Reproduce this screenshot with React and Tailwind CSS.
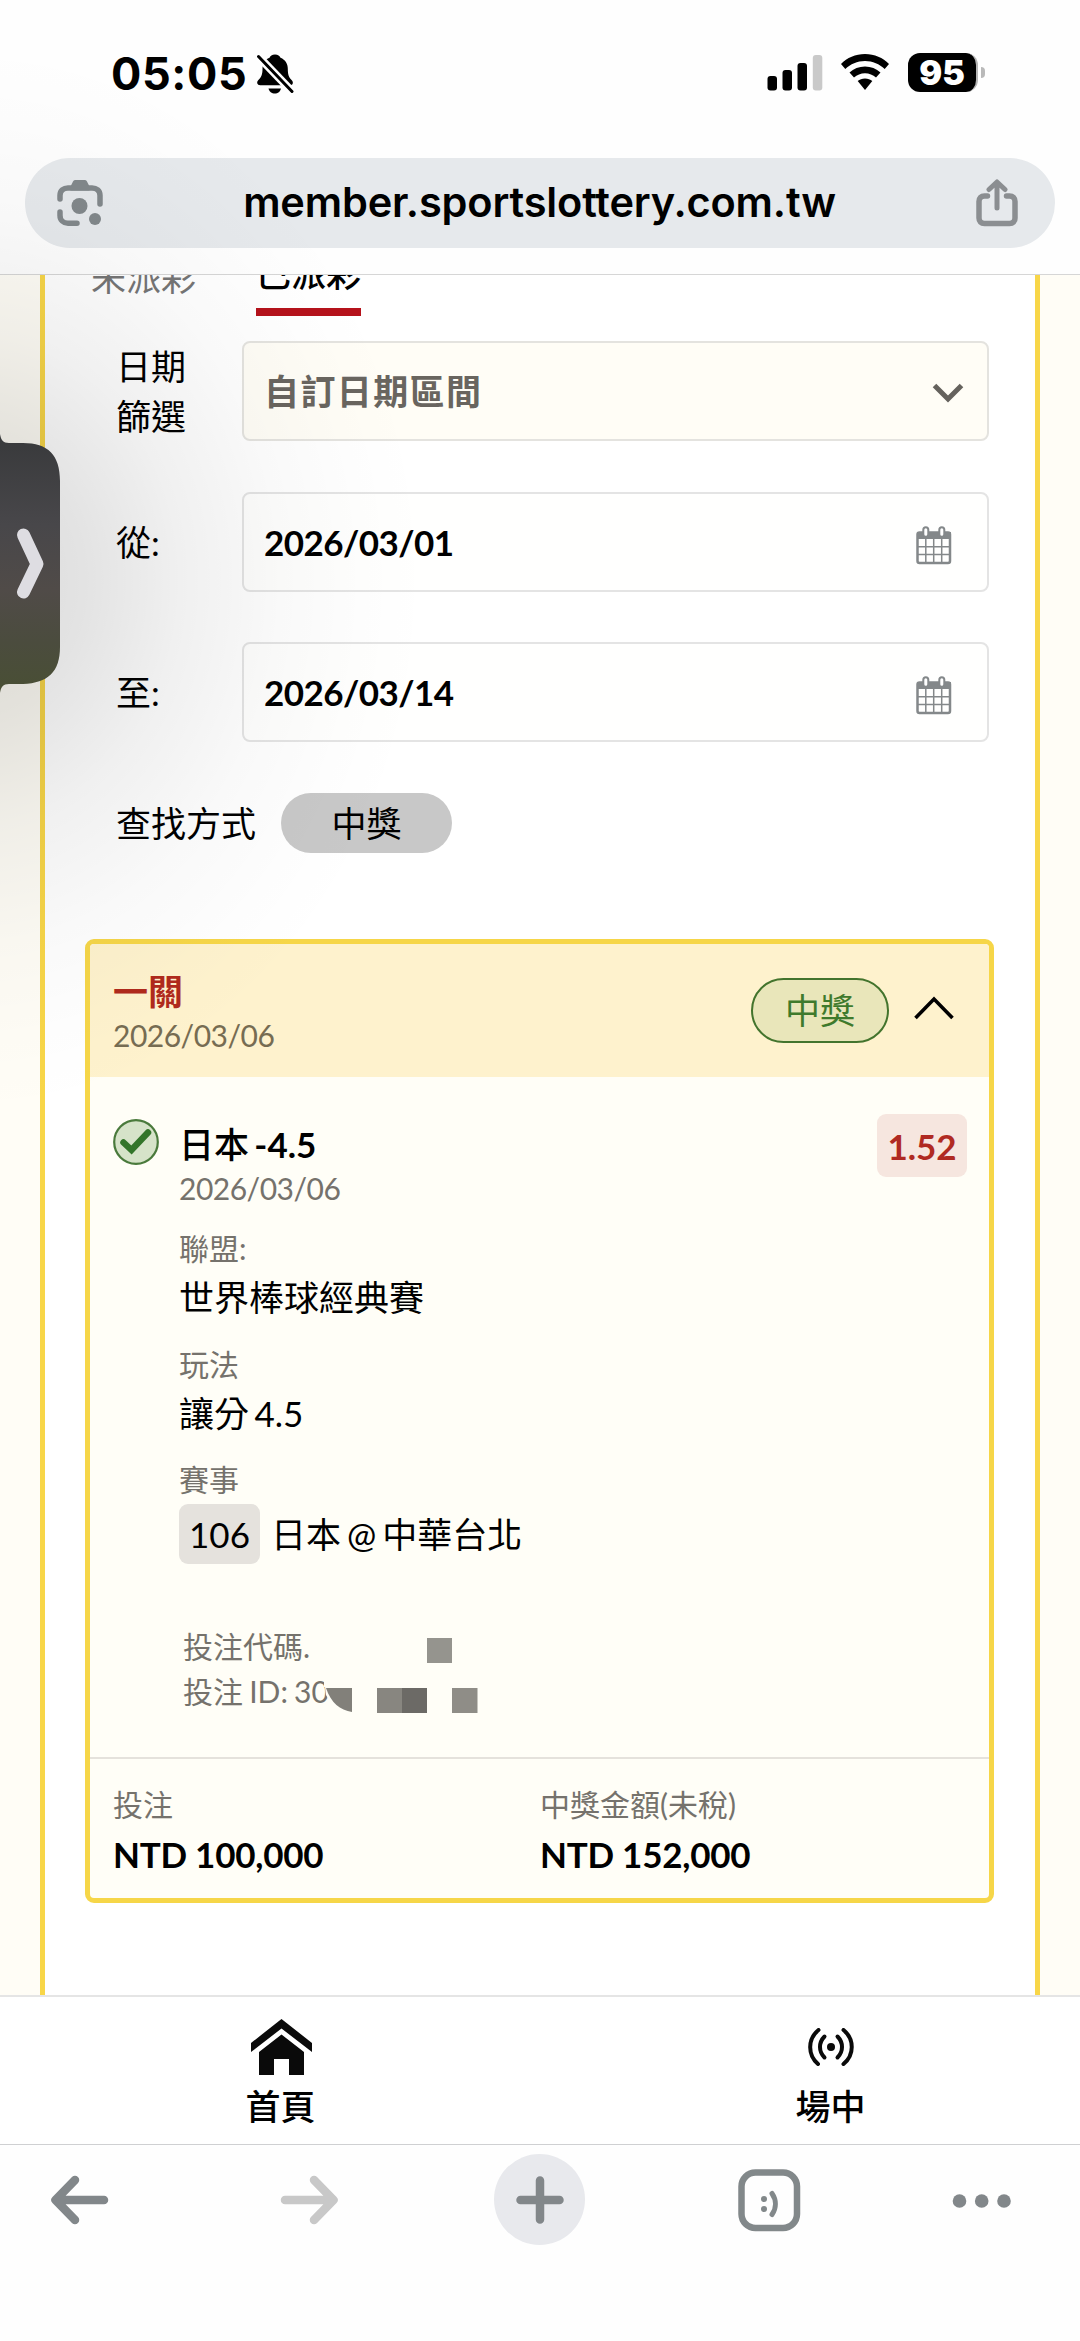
import React from "react";

const LATO = "font-[Lato,'Noto_Sans_CJK_TC',sans-serif]";

function BellOff() {
  return (
    <svg viewBox="0 0 38 40" className="h-[40px] w-[38px]">
      <path d="M19 0.500c3 0 4.800 1.600 5.500 3.300 5 2 7.300 6.200 7.300 11 0 6 1 8.700 4.200 11.700 1.600 1.600 1 4.700-1.800 4.700H4.200C1 31.200 0.500 28 2 26.500 5.200 23.300 6.500 21 6.500 14.800c0-5 2.300-9 7-11C14.200 2 16 0.500 19 0.500z" fill="#000" />
      <path d="M12.500 34.500h12.500c-0.600 3-3.200 5-6.200 5s-5.700-2-6.300-5z" fill="#000" />
      <path d="M1 1l37 38.500" stroke="#fff" strokeWidth="8" />
      <path d="M2.500 2.500l33.500 35" stroke="#000" strokeWidth="3" strokeLinecap="round" />
    </svg>
  );
}

function StatusBar() {
  return (
    <div className="flex h-[158px] items-start justify-between pr-[95px] pl-[111px]">
      <div className="flex items-start pt-[50px]">
        <span className="w-[145px] font-[Inter,sans-serif] text-[45px] leading-[48px] font-bold tracking-[0.600px] whitespace-nowrap text-black">05:05</span>
        <div className="pt-[4px]"><BellOff /></div>
      </div>
      <div className="flex items-start pt-[53px]">
        <svg viewBox="0 0 56 38" className="h-[38px] w-[56px]">
          <rect x="0.500" y="23" width="9.500" height="14.500" rx="3" />
          <rect x="15.500" y="17" width="9.500" height="20.500" rx="3" />
          <rect x="30.500" y="10" width="9.500" height="27.500" rx="3" />
          <rect x="45.800" y="2" width="9.500" height="35.500" rx="3" fill="#c9c9c9" />
        </svg>
        <svg viewBox="0 0 50 38" className="ml-[17px] h-[38px] w-[50px]">
          <path d="M25 1C15.500 1 7 4.700 1 11l4.300 5C10.500 11 17.300 7.900 25 7.900S39.500 11 44.700 16l4.300-5C43 4.700 34.500 1 25 1z" />
          <path d="M25 13.500c-6 0-11.300 2.200-15.500 6l4.500 5c3-2.600 6.800-4.200 11-4.200s8 1.600 11 4.200l4.500-5c-4.200-3.800-9.500-6-15.500-6z" />
          <path d="M25 25.500c-3 0-5.300 1-7.300 2.600L25 37l7.300-8.900c-2-1.600-4.300-2.600-7.300-2.600z" />
        </svg>
        <div className="ml-[18px] flex h-[39px] w-[70px] items-center justify-center rounded-[12px] border-r-[2px] border-[#b5b5b5] bg-black font-[Inter,sans-serif] text-[34px] leading-[38px] font-black text-white">95</div>
        <div className="mt-[14px] ml-[3px] h-[11px] w-[4px] rounded-r-full bg-[#b9b9b9]" />
      </div>
    </div>
  );
}

function UrlBar() {
  return (
    <div className="mx-[25px] flex h-[90px] items-center justify-between rounded-full bg-[#e6e9ec] pr-[36px] pl-[31px]">
      <svg viewBox="0 0 48 48" className="h-[48px] w-[48px]" fill="none" stroke="#82888b" strokeWidth="5.500" strokeLinecap="round">
        <path d="M4 20v-3.500C4 11.500 7.500 9 12 9h24c4.500 0 8 2.500 8 7.500V25" />
        <path d="M4 33v3.500c0 4.500 3.500 7.800 8 7.800h9" />
        <path d="M14.500 7.500l2.500-5c.5-1 1.300-1.500 2.500-1.500h9c1.200 0 2 .5 2.500 1.500l2.500 5v4h-19z" fill="#82888b" stroke="none" />
        <circle cx="23.500" cy="27" r="8" fill="#82888b" stroke="none" />
        <circle cx="39" cy="40" r="6" fill="#82888b" stroke="none" />
      </svg>
      <span className="-mt-[2px] font-[Inter,sans-serif] text-[41.500px] leading-[48px] font-semibold tracking-[-0.150px] whitespace-nowrap text-black">member.sportslottery.com.tw</span>
      <svg viewBox="0 0 44 48" className="h-[48px] w-[44px]" fill="none" stroke="#8b8e91" strokeWidth="5.500" strokeLinecap="round" strokeLinejoin="round">
        <path d="M12.500 17H9.500C6 17 4 19 4 22.500v16.500c0 3.500 2 5.500 5.500 5.500h25c3.500 0 5.500-2 5.500-5.500V22.500c0-3.500-2-5.500-5.500-5.500h-3" />
        <path d="M22 29V4M14 10.500l8-7.500 8 7.500" strokeWidth="5" />
      </svg>
    </div>
  );
}

function CalendarIcon() {
  return (
    <svg viewBox="0 0 36 40" className="h-[40px] w-[36px]" fill="none" stroke="#84888a">
      <rect x="1.500" y="7.500" width="32.500" height="30.500" rx="2" strokeWidth="2.500" />
      <path d="M1 7h34v7H1z" fill="#84888a" stroke="none" />
      <rect x="7.300" y="2.200" width="5" height="9.500" rx="2.500" fill="#fff" strokeWidth="2" />
      <rect x="23.300" y="2.200" width="5" height="9.500" rx="2.500" fill="#fff" strokeWidth="2" />
      <path d="M9.800 14v23M17.700 14v23M25.700 14v23M2 21.700h32M2 29.500h32" strokeWidth="1.500" />
    </svg>
  );
}

function DateRow({ label, value }) {
  return (
    <div className="flex h-[100px] items-center">
      <span className="w-[126px] text-[35px] leading-[50px]">{label}</span>
      <div className="flex h-[100px] w-[747px] items-center justify-between rounded-[8px] border-2 border-[#e4e4e4] bg-[#fffffe] pr-[35px] pl-[20px]">
        <span className="text-[35px] leading-[44px] font-bold tracking-[-0.550px]">{value}</span>
        <div className="pt-[6px]"><CalendarIcon /></div>
      </div>
    </div>
  );
}

function Filters() {
  return (
    <div className="pl-[71px]">
      <div className="mt-[25px] flex h-[100px] items-center">
        <span className="w-[126px] text-[35px] leading-[50px]">日期<br />篩選</span>
        <div className="flex h-[100px] w-[747px] items-center justify-between rounded-[8px] border-2 border-[#e4e3df] bg-[#fffdf6] pr-[23px] pl-[20px]">
          <span className="text-[35px] leading-[44px] font-bold tracking-[1.400px] text-[#69655f]">自訂日期區間</span>
          <svg viewBox="0 0 32 20" className="mt-[3px] h-[20px] w-[32px]" fill="none" stroke="#65625d" strokeWidth="5">
            <path d="M2.500 2.500L16 16 29.500 2.500" />
          </svg>
        </div>
      </div>
      <div className="mt-[51px]"><DateRow label="從:" value="2026/03/01" /></div>
      <div className="mt-[50px]"><DateRow label="至:" value="2026/03/14" /></div>
      <div className="mt-[51px] flex h-[60px] items-center">
        <span className="w-[165px] text-[35px] leading-[44px]">查找方式</span>
        <span className="flex h-[60px] w-[171px] items-center justify-center rounded-full bg-[#c8c8c8] text-[35px] leading-[44px]">中獎</span>
      </div>
    </div>
  );
}

/* Pixelated patches that hide the bet code and the bet number. */
function Mosaic() {
  return (
    <svg viewBox="0 0 300 92" className="absolute top-px left-[138px] h-[92px] w-[300px]">
      <rect x="7" y="45" width="30" height="17" fill="#fffef7" />
      <path d="M8 62l1 8 7 12h20V62z" fill="#fffef7" />
      <path d="M9 63h26v24c-12-2-21-9-26-24z" fill="#82807a" />
      <rect x="110" y="13" width="25" height="25" fill="#95948e" />
      <rect x="60" y="63" width="25" height="25" fill="#888680" />
      <rect x="85" y="63" width="25" height="25" fill="#6c6a66" />
      <rect x="135" y="63" width="25.500" height="25" fill="#8f8d87" />
    </svg>
  );
}

function BetCard() {
  return (
    <div className="mt-[86px] mr-[41px] ml-[40px] h-[964px] overflow-hidden rounded-[9px] border-[5px] border-[#f6d648] bg-[#fffef7]">
      <div className="flex h-[133px] items-start justify-between bg-[#fef2cd] pr-[35px] pl-[23px]">
        <div className="flex flex-col pt-[25px]">
          <span className="text-[35px] leading-[44px] font-bold text-[#b02a1c]">一關</span>
          <span className="text-[30px] leading-[44px] tracking-[-0.500px] text-[#766c52]">2026/03/06</span>
        </div>
        <div className="flex items-center pt-[34px]">
          <span className="flex h-[65px] w-[138px] items-center justify-center rounded-full border-2 border-[#43742d] bg-[#e9e6ba] pb-[2px] text-[35px] leading-[44px] text-[#3f7a2c]">中獎</span>
          <svg viewBox="0 0 40 24" className="ml-[25px] h-[24px] w-[40px] -translate-y-[3px]" fill="none" stroke="#000" strokeWidth="3.600">
            <path d="M1.500 22L20 3l18.500 19" />
          </svg>
        </div>
      </div>

      <div className="flex items-start pr-[22px] pl-[23px]">
        <svg viewBox="0 0 46 46" className="mt-[42px] h-[46px] w-[46px]">
          <circle cx="23" cy="23" r="21.800" fill="#d6e3c9" stroke="#4a7a3c" strokeWidth="2.200" />
          <path d="M10.500 23.500l8 7.500L35 13.500" fill="none" stroke="#33752a" strokeWidth="6.500" strokeLinecap="round" />
        </svg>
        <div className="ml-[20px] flex grow flex-col pt-[45px] [word-spacing:-3.500px]">
          <span className="text-[35px] leading-[44px] font-medium">日本 <span className="font-bold">-4.5</span></span>
          <span className="text-[30px] leading-[44px] tracking-[-0.500px] text-[#75726c]">2026/03/06</span>
          <span className="mt-[16px] text-[30px] leading-[44px] text-[#75726c]">聯盟:</span>
          <span className="mt-[5px] text-[35px] leading-[44px]">世界棒球經典賽</span>
          <span className="mt-[23px] text-[30px] leading-[44px] text-[#75726c]">玩法</span>
          <span className="mt-[5px] text-[35px] leading-[44px]">讓分 4.5</span>
          <span className="mt-[22px] text-[30px] leading-[44px] text-[#75726c]">賽事</span>
          <div className="mt-[3px] flex h-[60px] items-center gap-[11px]">
            <span className="flex h-[60px] w-[81px] items-center justify-center rounded-[9px] bg-[#e5e2dd] text-[35px] leading-[44px]">106</span>
            <span className="text-[35px] leading-[44px] [word-spacing:-3px]">日本 @ 中華台北</span>
          </div>
          <div className="relative mt-[60px] flex flex-col pl-[4px] text-[30px] leading-[44px] text-[#75726c]">
            <span>投注代碼.</span>
            <span className="mt-px [word-spacing:-1.500px]">投注 ID: 30</span>
            <Mosaic />
          </div>
        </div>
        <span className="mt-[37px] flex h-[63px] w-[90px] items-center justify-center rounded-[9px] bg-[#f6e6df] text-[35px] leading-[44px] font-bold text-[#b02a22]">1.52</span>
      </div>

      <div className="mt-[44px] grid grid-cols-[427px_1fr] border-t-2 border-[#e5e2dc] pt-[23px] pl-[23px]">
        <div className="flex flex-col">
          <span className="text-[30px] leading-[44px] text-[#75726c]">投注</span>
          <span className="mt-[6px] text-[35px] leading-[44px] font-bold tracking-[-0.250px]">NTD 100,000</span>
        </div>
        <div className="flex flex-col">
          <span className="text-[30px] leading-[44px] text-[#75726c]">中獎金額(未稅)</span>
          <span className="mt-[6px] text-[35px] leading-[44px] font-bold tracking-[-0.250px]">NTD 152,000</span>
        </div>
      </div>
    </div>
  );
}

function SiteNav() {
  return (
    <nav className="flex h-[149px] shrink-0 border-t-2 border-[#e5e5e5] bg-white">
      <div className="flex w-[561px] flex-col items-center pt-[22px]">
        <svg viewBox="0 0 61 56" className="h-[56px] w-[61px] translate-x-px" fill="#0a0a0a">
          <path d="M30.500 0L61 24v9L30.500 9.500 0 33v-9z" />
          <path d="M30.500 15.500L53 33v23H38V40H23v16H8V33z" />
        </svg>
        <span className="mt-[9px] text-[35px] leading-[44px] font-medium">首頁</span>
      </div>
      <div className="flex grow flex-col items-center pt-[31px] pl-[20px]">
        <svg viewBox="0 0 46 38" className="h-[38px] w-[46px]" fill="none" stroke="#0a0a0a" strokeWidth="4" strokeLinecap="round">
          <path d="M10.500 2C-0.500 11-0.500 27 10 36M35.500 2c11 9 11 25 0 34" />
          <path d="M16.500 8.500c-6 6-6 15 0 21M29.500 8.500c6 6 6 15 0 21" />
          <circle cx="23" cy="19" r="4" fill="#0a0a0a" stroke="none" />
        </svg>
        <span className="mt-[18px] text-[35px] leading-[44px] font-medium">場中</span>
      </div>
    </nav>
  );
}

function BrowserToolbar() {
  return (
    <div className="flex h-[197px] shrink-0 items-start justify-between border-t border-[#cfd0d2] bg-[#fefefe] pr-[68px] pl-[50px]">
      <svg viewBox="0 0 60 50" className="mt-[30px] h-[50px] w-[60px]" fill="none" stroke="#82878a" strokeWidth="8.500" strokeLinecap="round" strokeLinejoin="round">
        <path d="M54 25H6M25 5L5.500 25 25 45" />
      </svg>
      <svg viewBox="0 0 60 50" className="mt-[30px] ml-[43px] h-[50px] w-[60px]" fill="none" stroke="#c8c8c8" strokeWidth="8.500" strokeLinecap="round" strokeLinejoin="round">
        <path d="M6 25h48M35 5l19.500 20L35 45" />
      </svg>
      <div className="mt-[9px] ml-[30px] flex size-[91px] items-center justify-center rounded-full bg-[#e8e9ed]">
        <svg viewBox="0 0 48 48" className="size-[48px]" stroke="#82878a" strokeWidth="8.500" strokeLinecap="round">
          <path d="M24 4.500v39M4.500 24h39" />
        </svg>
      </div>
      <svg viewBox="0 0 64 64" className="mt-[23px] ml-[26px] size-[64px]" fill="none" stroke="#82888a" strokeWidth="6.500" strokeLinecap="round">
        <rect x="4.500" y="4.500" width="55.500" height="55.500" rx="14" />
        <circle cx="27" cy="31" r="3" fill="#82888a" stroke="none" />
        <circle cx="27" cy="41" r="3" fill="#82888a" stroke="none" />
        <path d="M35 25.500c4.500 6.500 4.500 14.500 0 21" strokeWidth="5" />
      </svg>
      <svg viewBox="0 0 60 16" className="mt-[48px] ml-[26px] h-[16px] w-[60px]" fill="#82878a">
        <circle cx="7.500" cy="8" r="6.800" />
        <circle cx="29.700" cy="8" r="6.800" />
        <circle cx="52" cy="8" r="6.800" />
      </svg>
    </div>
  );
}

/* Handle of the picture-in-picture window parked at the left edge, with its soft shadow. */
function PipHandle() {
  return (
    <>
      <div className="pointer-events-none absolute top-[40px] left-0 h-[1100px] w-[480px] bg-[radial-gradient(ellipse_460px_540px_at_-30px_540px,rgba(0,0,0,0.150)_0%,rgba(0,0,0,0.110)_25%,rgba(0,0,0,0.060)_46%,rgba(0,0,0,0.022)_68%,rgba(0,0,0,0.006)_86%,rgba(0,0,0,0)_100%)]" />
      <svg viewBox="0 0 62 264" className="absolute top-[432px] left-0 h-[264px] w-[62px]">
        <defs>
          <linearGradient id="pip" x1="0" y1="0" x2="0" y2="1">
            <stop offset="0" stopColor="#38393b" />
            <stop offset="0.350" stopColor="#48474a" />
            <stop offset="0.600" stopColor="#504b48" />
            <stop offset="0.800" stopColor="#4b4c3e" />
            <stop offset="1" stopColor="#494f34" />
          </linearGradient>
        </defs>
        <path d="M0 2C1 8 3 11 9 11h14c25 0 37 12 37 38v166c0 25-12 36-37 37H9c-6 0-8 3-9 9z" fill="url(#pip)" />
        <path d="M23.500 103L37 132 23.500 160" fill="none" stroke="#dedde2" strokeWidth="13" strokeLinecap="round" strokeLinejoin="round" />
      </svg>
    </>
  );
}

export default function App() {
  return (
    <div className={`relative flex h-[2341px] w-[1080px] flex-col overflow-hidden bg-white text-black ${LATO}`}>
      <header className="h-[275px] shrink-0 border-b border-[#d6d6d6] bg-[#fefefe]">
        <StatusBar />
        <UrlBar />
      </header>

      <main className="h-[1720px] shrink-0 overflow-hidden bg-[#fffdf6] px-[40px]">
        <div className="h-full overflow-hidden border-x-[5px] border-[#f8d648] bg-white">
          <div className="-mt-[24px] flex h-[65px] gap-[60px] pl-[46px] text-[35px] leading-[44px]">
            <span className="mt-[4px] text-[#757575]">未派彩</span>
            <span className="h-[65px] border-b-[8px] border-[#b5121b] font-medium">已派彩</span>
          </div>
          <Filters />
          <BetCard />
        </div>
      </main>

      <SiteNav />
      <BrowserToolbar />
      <PipHandle />
    </div>
  );
}
